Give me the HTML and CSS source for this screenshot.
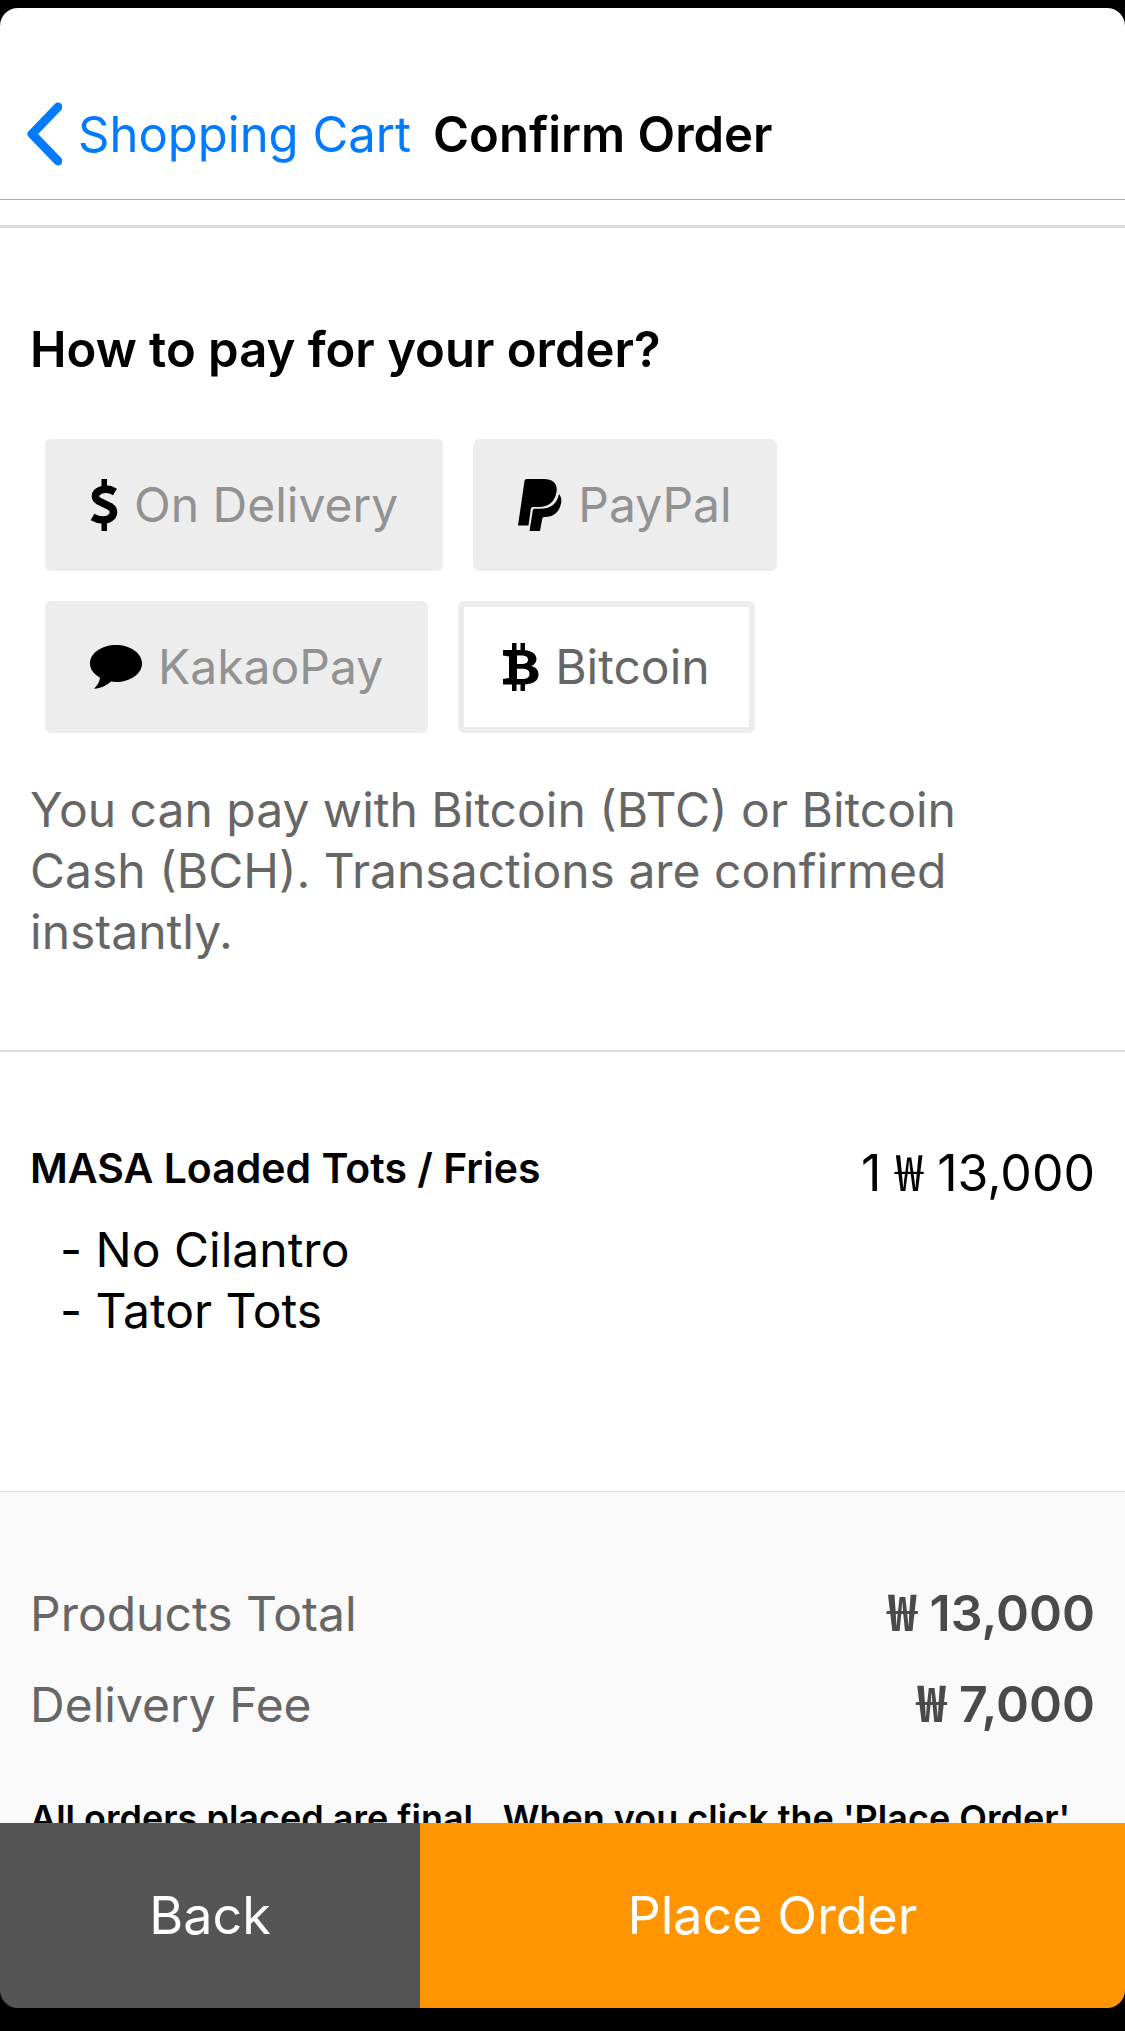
FILE: index.html
```html
<!DOCTYPE html>
<html lang="en">
<head>
<meta charset="utf-8">
<meta name="viewport" content="width=device-width, initial-scale=1">
<title>Confirm Order</title>
<link rel="stylesheet" href="styles.css">
</head>
<body>
<div class="app">
  <header class="nav">
    <a class="nav-back" href="#cart">
      <svg class="chevron" viewBox="0 0 36 64" aria-hidden="true"><path d="M32 5 6 32 32 59" fill="none" stroke="currentColor" stroke-width="9" stroke-linecap="round" stroke-linejoin="round"/></svg>
      <span>Shopping Cart</span>
    </a>
    <h1 class="nav-title">Confirm Order</h1>
  </header>

  <main class="content">
    <section class="payment">
      <h2 class="heading">How to pay for your order?</h2>
      <div class="methods">
        <button class="method" type="button" aria-pressed="false">
          <svg class="icon" width="28" height="52" viewBox="0 0 28 52" aria-hidden="true"><path d="M25 13C20 10 14 9.500 10 11.500 4.500 14 4 19 8.500 22L20 27.500c5.500 3.500 4 10-1.500 12.500C13 42 7 40.500 2.500 38" fill="none" stroke="currentColor" stroke-width="7.500"/><path d="M11.500 0h5.500v11h-5.500zM11.500 40h5.500v12h-5.500z" fill="currentColor"/></svg>
          <span>On Delivery</span>
        </button>
        <button class="method" type="button" aria-pressed="false">
          <svg class="icon" width="44" height="52" viewBox="0 0 44 52" aria-hidden="true"><path d="M9 0h17c9 0 14 5 12.500 13C37 23 30 28 21 28h-6c-1.500 0-2 1-2.200 2L10.500 46.500H0L6.500 2C6.700.7 7.500 0 9 0z" fill="currentColor"/><path d="M41 15c2.500 3 3 7 1.500 11.500C40 34.500 34.500 38 27 38c-1.500 0-2.500.6-2.800 2L22 52H11.500l3.300-20.500c.2-1.200.8-1.700 2-1.700H22C32.500 29.800 39 25 41 15z" fill="currentColor"/></svg>
          <span>PayPal</span>
        </button>
        <button class="method" type="button" aria-pressed="false">
          <svg class="icon" width="52" height="44" viewBox="0 0 52 44" aria-hidden="true"><path d="M26 0c14.400 0 26 8.200 26 18.500S40.400 37 26 37c-1.700 0-3.400-.1-5-.4-5 4-9.500 6.900-17 7.200 3.500-3.500 5.500-7 6-11C4 29 0 24.500 0 18.500 0 8.200 11.600 0 26 0z" fill="currentColor"/></svg>
          <span>KakaoPay</span>
        </button>
        <button class="method method-selected" type="button" aria-pressed="true">
          <svg class="icon" width="36" height="48" viewBox="0 0 36 48" aria-hidden="true"><path fill-rule="evenodd" fill="currentColor" d="M9 0h4.500v7h4V0H22v7.200c7 .6 11.500 3.800 11.500 8.800 0 3.500-2 5.800-5.500 7 5 1.200 7.500 4.200 7.500 8.500 0 6-5 9.500-13.500 9.900V48h-4.500v-6.500h-4V48H9v-6.500H0V36l6-1V13.500L0 12.500V7h9zM14 12.500V21h4c4.500 0 7-1 7-4.200s-2.500-4.300-7-4.300zm0 13.300V36h5c5 0 7.500-1.700 7.500-5.100s-2.500-5.100-7.500-5.100z"/></svg>
          <span>Bitcoin</span>
        </button>
      </div>
      <p class="note">You can pay with Bitcoin (BTC) or Bitcoin Cash (BCH). Transactions are confirmed instantly.</p>
    </section>

    <section class="item">
      <div class="item-info">
        <h3 class="item-name">MASA Loaded Tots / Fries</h3>
        <ul class="options">
          <li>- No Cilantro</li>
          <li>- Tator Tots</li>
        </ul>
      </div>
      <p class="item-price">1 <span class="won">₩</span> 13,000</p>
    </section>

    <section class="summary">
      <dl class="totals">
        <div class="total"><dt>Products Total</dt><dd><span class="won">₩</span> 13,000</dd></div>
        <div class="total"><dt>Delivery Fee</dt><dd><span class="won">₩</span> 7,000</dd></div>
      </dl>
      <p class="terms">All orders placed are final.&nbsp; When you click the 'Place Order'</p>
    </section>
  </main>

  <footer class="actions">
    <button class="action action-back" type="button">Back</button>
    <button class="action action-place" type="button">Place Order</button>
  </footer>
</div>
</body>
</html>
```
FILE: styles.css
```css
* {
  box-sizing: border-box;
}

body {
  margin: 0;
  background: #000;
  color: #000;
  font: 400 48px/61px Inter, "Liberation Sans", sans-serif;
}

h1, h2, h3, p, ul, dl, dd {
  margin: 0;
  padding: 0;
}

button {
  font: inherit;
  border: 0;
  cursor: pointer;
}

.app {
  display: flex;
  flex-direction: column;
  height: 100vh;
  padding: 8px 0 23px;
}

.nav {
  display: flex;
  align-items: center;
  gap: 22px;
  flex: none;
  padding: 94px 26px 33px;
  background: #fff;
  border-bottom: 1px solid #aaa;
  border-radius: 18px 18px 0 0;
}

.nav-back {
  display: flex;
  align-items: center;
  gap: 16px;
  color: #007aff;
  font-size: 49px;
  text-decoration: none;
}

.chevron {
  width: 36px;
  height: 64px;
}

.nav-title {
  font-size: 49px;
  font-weight: 600;
}

.content {
  flex: 1;
  min-height: 0;
  padding-top: 25px;
  overflow: hidden;
  background: #fff;
}

.payment {
  padding: 91px 30px 88px;
  border-top: 3px solid #ddd;
  border-bottom: 2px solid #ddd;
}

.heading {
  font-size: 49px;
  font-weight: 600;
}

.methods {
  display: flex;
  flex-wrap: wrap;
  gap: 30px;
  padding: 59px 15px 46px;
}

.method {
  display: flex;
  align-items: center;
  gap: 16px;
  padding: 30px 39px;
  border: 6px solid #ededed;
  border-radius: 6px;
  background: #ededed;
  color: #929292;
  line-height: 60px;
}

.method-selected {
  background: #fff;
  color: #666;
}

.icon {
  flex: none;
  color: #000;
}

.note {
  padding-right: 60px;
  color: #666;
}

.item {
  display: flex;
  justify-content: space-between;
  padding: 91px 30px 150px;
}

.item-name {
  font-size: 41px;
  font-weight: 600;
  line-height: 50px;
}

.options {
  padding: 26px 0 0 30px;
  list-style: none;
  font-variant-ligatures: no-contextual;
}

.item-price {
  font-size: 50px;
  white-space: nowrap;
}

.won {
  font-family: "Noto Sans CJK KR", sans-serif;
  line-height: 1px;
}

.summary {
  padding: 91px 30px 0;
  border-top: 1px solid #ddd;
  background: #fafafa;
}

.totals {
  display: grid;
  gap: 30px;
}

.total {
  display: flex;
  justify-content: space-between;
  color: #666;
}

.total dd {
  color: #4a4a4a;
  font-size: 50px;
  font-weight: 600;
}

.terms {
  padding-top: 58px;
  font-size: 36px;
  font-weight: 600;
  line-height: 50px;
  white-space: nowrap;
}

.actions {
  display: grid;
  grid-template-columns: 28fr 47fr;
  flex: none;
  overflow: hidden;
  border-radius: 0 0 18px 18px;
}

.action {
  padding: 62px 24px;
  color: #fff;
  font-size: 52px;
}

.action-back {
  background: #555;
}

.action-place {
  background: #ff9500;
}
```
